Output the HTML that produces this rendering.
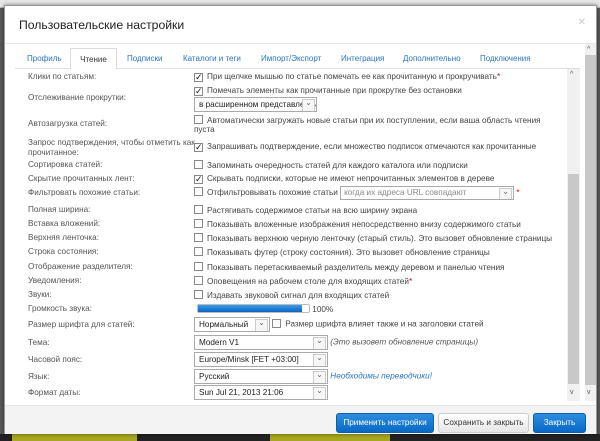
<!DOCTYPE html>
<html><head><meta charset="utf-8"><style>
*{box-sizing:border-box}
body{margin:0;width:600px;height:441px;overflow:hidden;background:#5a5a5a;font-family:"Liberation Sans",sans-serif;font-size:8.2px;color:#444;position:relative}
.topbar{position:absolute;left:0;top:0;width:600px;height:8px;background:#e8e8e8;border-bottom:1px solid #bbb}
.bot{position:absolute;left:0;top:434px;width:600px;height:7px;background:#222}
.bot i{position:absolute;top:0;height:7px;background:#a8a820}
.dlg{position:absolute;left:4px;top:5px;width:593px;height:429px;background:#fff;border:1px solid #999;box-shadow:0 0 4px rgba(0,0,0,.5)}
.hd{position:absolute;left:0;top:0;width:100%;height:38px;border-bottom:1px solid #e5e5e5}
.hd h1{margin:0;position:absolute;left:14px;top:12px;font-size:12.2px;font-weight:normal;color:#222}
.x{position:absolute;right:10px;top:11px;color:#ccc;font-size:10px}
.tabs{position:absolute;left:10px;top:42px;width:565px;height:21px;border-bottom:1px solid #ddd;white-space:nowrap}
.tab{position:absolute;top:6px;color:#2a75c8;font-size:8px}
.tab.a{top:0;height:22px;border:1px solid #ddd;border-bottom:1px solid #fff;background:#fff;color:#333;padding:6px 0;text-align:center;left:55px;width:47px}
.panel{position:absolute;left:10px;top:63px;width:565px;height:332px;overflow:hidden}
.sb{position:absolute;left:552px;top:0;width:13px;height:332px;background:#f0f0f0}
.sb .th{position:absolute;left:1px;top:105px;width:11px;height:210px;background:#c8c8c8}
.osb{position:absolute;left:580px;top:38px;width:11px;height:357px;background:#f0f0f0}
.osb .th{position:absolute;left:0;top:11px;width:11px;height:330px;background:#c8c8c8}
.arr{position:absolute;font-size:7px;color:#555;left:3px}
.r{position:absolute;left:0;width:550px}
.l{position:absolute;left:13px;color:#555;white-space:nowrap}
.c{position:absolute;left:179px;color:#444;white-space:nowrap}
.cb{display:inline-block;width:9px;height:9px;border:1px solid #888;background:#fff;vertical-align:-1px;margin-right:4px;position:relative;font-size:9px;line-height:7px;color:#111}
.sel{display:inline-block;border:1px solid #aaa;background:#fff;height:15px;padding:2px 4px;position:relative;color:#222;vertical-align:middle;overflow:hidden;white-space:nowrap}
.sel:after{content:"⌄";position:absolute;right:1px;top:1px;width:11px;height:11px;border:1px solid #ccc;font-size:8px;text-align:center;line-height:6px;color:#666;background:#f6f6f6}
.red{color:#d00}
.ft{position:absolute;left:0;top:399px;width:100%;height:29px;background:#f3f3f3;border-top:1px solid #e3e3e3}
.btn{position:absolute;top:7px;height:20px;border-radius:3px;font-size:8.2px;text-align:center;line-height:18px;white-space:nowrap}
.bl{background:linear-gradient(#2d8ee0,#0968c4);color:#fff;border:1px solid #0b5fae}
.gr{background:linear-gradient(#fff,#e6e6e6);color:#333;border:1px solid #ccc}
</style></head><body>
<div class="topbar"></div>
<div class="bot"><i style="left:12px;width:125px"></i><i style="left:270px;width:120px"></i></div>
<div class="dlg">
<div class="hd"><h1>Пользовательские настройки</h1><span class="x">✕</span></div>
<div class="tabs">
<span class="tab" style="left:12px">Профиль</span>
<span class="tab a">Чтение</span>
<span class="tab" style="left:112px">Подписки</span>
<span class="tab" style="left:168px">Каталоги и теги</span>
<span class="tab" style="left:246px">Импорт/Экспорт</span>
<span class="tab" style="left:326px">Интеграция</span>
<span class="tab" style="left:388px">Дополнительно</span>
<span class="tab" style="left:465px">Подключения</span>
</div>
<div class="panel">
<div class="sb"><span class="arr" style="top:2px">^</span><div class="th"></div><span class="arr" style="top:320px">v</span></div>
<div class="r" style="top:3px"><span class="l">Клики по статьям:</span><span class="c"><span class="cb">✓</span>При щелчке мышью по статье помечать ее как прочитанную и прокручивать<span class="red">*</span></span></div>
<div class="r" style="top:17px"><span class="l" style="top:7px">Отслеживание прокрутки:</span><span class="c"><span class="cb">✓</span>Помечать элементы как прочитанные при прокрутке без остановки</span><span class="c" style="top:11px"><span class="sel" style="width:123px;padding-right:14px">в расширенном представлении</span></span></div>
<div class="r" style="top:46px"><span class="l" style="top:4px">Автозагрузка статей:</span><span class="c"><span class="cb"></span>Автоматически загружать новые статьи при их поступлении, если ваша область чтения<br>пуста</span></div>
<div class="r" style="top:69px"><span class="l" style="line-height:10px">Запрос подтверждения, чтобы отметить как<br>прочитанное:</span><span class="c" style="top:4px"><span class="cb">✓</span>Запрашивать подтверждение, если множество подписок отмечаются как прочитанные</span></div>
<div class="r" style="top:91px"><span class="l">Сортировка статей:</span><span class="c"><span class="cb"></span>Запоминать очередность статей для каждого каталога или подписки</span></div>
<div class="r" style="top:105px"><span class="l">Скрытие прочитанных лент:</span><span class="c"><span class="cb">✓</span>Скрывать подписки, которые не имеют непрочитанных элементов в дереве</span></div>
<div class="r" style="top:119px"><span class="l">Фильтровать похожие статьи:</span><span class="c" style="top:-2px"><span class="cb"></span>Отфильтровывать похожие статьи <span class="sel" style="width:174px;color:#888;height:14px;padding:1px 3px">когда их адреса URL совпадают</span> <span class="red">*</span></span></div>
<div class="r" style="top:136px"><span class="l">Полная ширина:</span><span class="c"><span class="cb"></span>Растягивать содержимое статьи на всю ширину экрана</span></div>
<div class="r" style="top:150px"><span class="l">Вставка вложений:</span><span class="c"><span class="cb"></span>Показывать вложенные изображения непосредственно внизу содержимого статьи</span></div>
<div class="r" style="top:164px"><span class="l">Верхняя ленточка:</span><span class="c"><span class="cb"></span>Показывать верхнюю черную ленточку (старый стиль). Это вызовет обновление страницы</span></div>
<div class="r" style="top:178px"><span class="l">Строка состояния:</span><span class="c"><span class="cb"></span>Показывать футер (строку состояния). Это вызовет обновление страницы</span></div>
<div class="r" style="top:193px"><span class="l">Отображение разделителя:</span><span class="c"><span class="cb"></span>Показывать перетаскиваемый разделитель между деревом и панелью чтения</span></div>
<div class="r" style="top:207px"><span class="l">Уведомления:</span><span class="c"><span class="cb"></span>Оповещения на рабочем столе для входящих статей<span class="red">*</span></span></div>
<div class="r" style="top:221px"><span class="l">Звуки:</span><span class="c"><span class="cb"></span>Издавать звуковой сигнал для входящих статей</span></div>
<div class="r" style="top:235px"><span class="l">Громкость звука:</span><span class="c" style="left:182px;top:0"><span style="display:inline-block;width:113px;height:9px;border:1px solid #bbb;border-radius:2px;background:#fff;position:relative;vertical-align:-1px"><span style="position:absolute;left:0;top:0;width:104px;height:7px;background:linear-gradient(#3a9be6,#0a66c2)"></span></span> 100%</span></div>
<div class="r" style="top:251px"><span class="l">Размер шрифта для статей:</span><span class="c" style="top:-3px"><span class="sel" style="width:76px">Нормальный</span> <span class="cb"></span>Размер шрифта влияет также и на заголовки статей</span></div>
<div class="r" style="top:269px"><span class="l">Тема:</span><span class="c" style="top:-3px"><span class="sel" style="width:134px">Modern V1</span> <i style="color:#555">(Это вызовет обновление страницы)</i></span></div>
<div class="r" style="top:286px"><span class="l">Часовой пояс:</span><span class="c" style="top:-3px"><span class="sel" style="width:134px">Europe/Minsk [FET +03:00]</span></span></div>
<div class="r" style="top:303px"><span class="l">Язык:</span><span class="c" style="top:-3px"><span class="sel" style="width:134px">Русский</span> <i style="color:#2a75c8">Необходимы переводчики!</i></span></div>
<div class="r" style="top:319px"><span class="l">Формат даты:</span><span class="c" style="top:-3px"><span class="sel" style="width:134px">Sun Jul 21, 2013 21:06</span></span></div>
</div>
<div class="osb"><span class="arr" style="top:2px;left:2px">^</span><div class="th"></div><span class="arr" style="top:345px;left:2px">v</span></div>
<div class="ft">
<div class="btn bl" style="left:331px;width:98px">Применить настройки</div>
<div class="btn gr" style="left:433px;width:91px">Сохранить и закрыть</div>
<div class="btn bl" style="left:528px;width:53px">Закрыть</div>
</div>
</div>
</body></html>
